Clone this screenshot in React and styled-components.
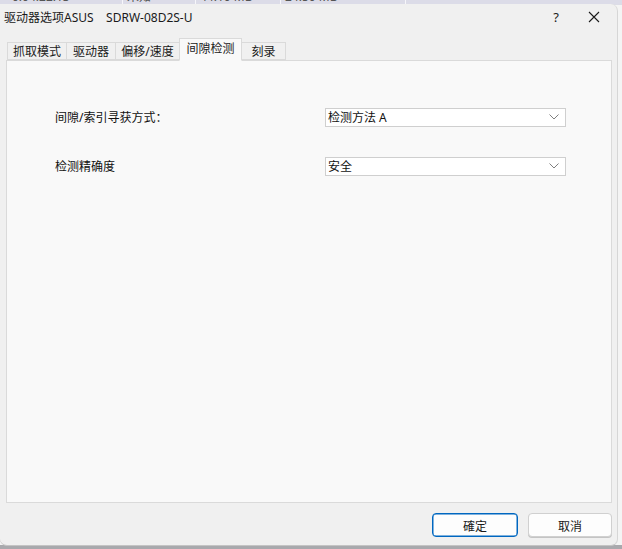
import React from 'react'
import styled, {createGlobalStyle} from 'styled-components'

const tabs = [
  {label: '抓取模式', width: 60},
  {label: '驱动器', width: 50},
  {label: '偏移/速度', width: 65},
  {label: '间隙检测', width: 63, active: true},
  {label: '刻录', width: 45},
]
const behindCells = [
  {text: '0:04:22.13', width: 110},
  {text: '未知', width: 68},
  {text: '44.10 MB', width: 80},
  {text: '24.50 MB', width: 120},
]

const GlobalStyle = createGlobalStyle`
  html, body {
    margin: 0;
    padding: 0;
    background: #b9b9bd;
  }
  body {
    font-family: "Segoe UI", "Noto Sans", "Noto Sans CJK SC", sans-serif;
    font-size: 12px;
    color: #1a1a1a;
  }
`

const App = () => {
  return (
    <Screen>
      <GlobalStyle />
      <BehindTable>
        {behindCells.map(cell => (
          <BehindCell key={cell.text} $width={cell.width}>
            {cell.text}
          </BehindCell>
        ))}
      </BehindTable>
      <Dialog>
        <TitleBar>
          <Title>驱动器选项ASUS&nbsp;&nbsp;&nbsp;&nbsp;SDRW-08D2S-U</Title>
          <TitleButton>?</TitleButton>
          <TitleButton $close>
            <svg width="12" height="12" viewBox="0 0 12 12">
              <path d="M1 1 L11 11 M11 1 L1 11" stroke="#1a1a1a" strokeWidth="1.1" />
            </svg>
          </TitleButton>
        </TitleBar>

        <TabRow>
          {tabs.map(tab => (
            <Tab key={tab.label} $active={tab.active} $width={tab.width}>
              {tab.label}
            </Tab>
          ))}
        </TabRow>

        <Panel>
          <FieldRow>
            <Label>间隙/索引寻获方式：</Label>
            <Select>
              <span>检测方法 A</span>
              <Chevron />
            </Select>
          </FieldRow>
          <FieldRow>
            <Label>检测精确度</Label>
            <Select>
              <span>安全</span>
              <Chevron />
            </Select>
          </FieldRow>
        </Panel>

        <ButtonBar>
          <Button $primary>確定</Button>
          <Button>取消</Button>
        </ButtonBar>
      </Dialog>
    </Screen>
  )
}

const Chevron = () => (
  <svg width="10" height="6" viewBox="0 0 10 6">
    <path d="M0.5 0.5 L5 5 L9.5 0.5" fill="none" stroke="#707070" strokeWidth="0.9" />
  </svg>
)

// Styled Components
const Screen = styled.div`
  width: 622px;
  height: 549px;
  overflow: hidden;
  background: linear-gradient(#dcdce6 0, #dcdce6 5px, #f4f4f4 5px, #f4f4f4 545px, #a9a9ad 545px);
  display: flex;
  flex-direction: column;
`

const BehindTable = styled.div`
  height: 4px;
  overflow: hidden;
  display: flex;
  padding-left: 8px;
  background: #dcdce8;
`

const BehindCell = styled.div`
  width: ${p => p.$width}px;
  margin-top: -9px;
  line-height: 12px;
  font-size: 12px;
  color: #555;
  border-right: 1px solid #f6f6fa;
  padding-left: 4px;
`

const Dialog = styled.div`
  width: 618px;
  height: 542px;
  box-sizing: border-box;
  background: #f0f0f0;
  border-radius: 0 7px 7px 7px;
  border-right: 1px solid #d6d6d6;
  border-bottom: 1px solid #c4c4c4;
  display: flex;
  flex-direction: column;
`

const TitleBar = styled.div`
  height: 25px;
  display: flex;
  align-items: center;
  padding-left: 4px;
  padding-right: 8px;
`

const Title = styled.div`
  flex: 1;
  font-size: 12px;
  color: #1a1a1a;
`

const TitleButton = styled.div`
  width: ${p => (p.$close ? 30 : 46)}px;
  text-align: center;
  font-size: 13px;
  display: flex;
  justify-content: center;
  align-items: center;
`

const TabRow = styled.div`
  height: 31px;
  display: flex;
  align-items: flex-end;
  padding-left: 7px;
  position: relative;
  z-index: 1;
`

const Tab = styled.div`
  box-sizing: border-box;
  width: ${p => p.$width}px;
  height: ${p => (p.$active ? 23 : 18)}px;
  line-height: ${p => (p.$active ? 19 : 17)}px;
  text-align: center;
  margin-bottom: ${p => (p.$active ? -1 : 0)}px;
  margin-left: -1px;
  font-size: 12px;
  color: #1a1a1a;
  background: ${p => (p.$active ? '#f9f9f9' : '#f0f0f0')};
  border: 1px solid #dadada;
  border-bottom: ${p => (p.$active ? '1px solid #f9f9f9' : '1px solid #dadada')};
  &:first-child {
    margin-left: 0;
  }
`

const Panel = styled.div`
  box-sizing: border-box;
  margin-left: 6px;
  width: 606px;
  height: 443px;
  background: #f9f9f9;
  border: 1px solid #dadada;
  padding: 47px 0 0 48px;
  display: flex;
  flex-direction: column;
  gap: 31px;
`

const FieldRow = styled.div`
  display: flex;
  align-items: center;
  height: 18px;
`

const Label = styled.div`
  width: 270px;
  font-size: 12px;
  color: #111;
`

const Select = styled.div`
  box-sizing: border-box;
  width: 241px;
  height: 19px;
  background: #fff;
  border: 1px solid #cfcfcf;
  display: flex;
  align-items: center;
  justify-content: space-between;
  padding: 0 6px 0 2px;
  font-size: 12px;
  color: #111;
`

const ButtonBar = styled.div`
  flex: 1;
  display: flex;
  justify-content: flex-end;
  align-items: flex-start;
  padding: 10px 5px 0 0;
  gap: 10px;
`

const Button = styled.button`
  box-sizing: border-box;
  width: ${p => (p.$primary ? 86 : 84)}px;
  height: 24px;
  font-family: "Noto Sans CJK SC", sans-serif;
  font-size: 12px;
  color: #1a1a1a;
  background: #fdfdfd;
  border: 1px solid ${p => (p.$primary ? '#0067c0' : '#d0d0d0')};
  border-radius: 4px;
  box-shadow: ${p => (p.$primary ? 'inset 0 0 0 0.5px #0067c0' : '0 1px 0 #c4c4c4')};
  padding: 0;
`

export default App
